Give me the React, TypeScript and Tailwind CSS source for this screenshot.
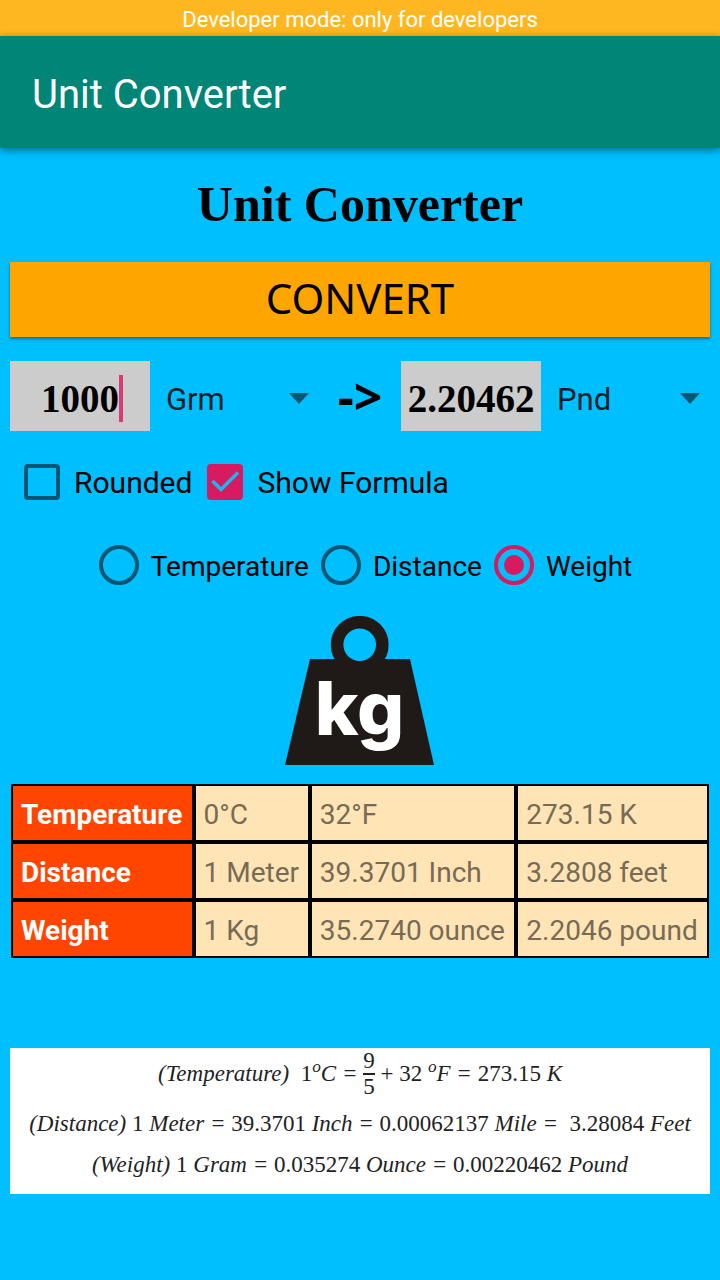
import { useState } from "react";

const table = [
  ["Temperature", "0°C", "32°F", "273.15 K"],
  ["Distance", "1 Meter", "39.3701 Inch", "3.2808 feet"],
  ["Weight", "1 Kg", "35.2740 ounce", "2.2046 pound"],
];

function UnitSelect({ label, options }: { label: string; options: string[] }) {
  return (
    <div className="relative h-full min-w-0">
      <select
        aria-label={label}
        className="h-full w-full appearance-none bg-transparent pt-2 pl-4 text-[31px] leading-10 text-black/85 outline-none"
      >
        {options.map((o) => (
          <option key={o}>{o}</option>
        ))}
      </select>
      <svg
        className="pointer-events-none absolute top-8 right-[10px] h-[11px] w-5 text-[#005673]"
        viewBox="0 0 20 11"
        fill="currentColor"
        aria-hidden="true"
      >
        <path d="M0 0h20L10 11z" />
      </svg>
    </div>
  );
}

function Check({ label, initial }: { label: string; initial: boolean }) {
  const [on, setOn] = useState(initial);
  return (
    <label className="flex items-center gap-[14px] text-[30px] leading-9">
      <span className="relative flex size-9">
        <input
          type="checkbox"
          checked={on}
          onChange={() => setOn(!on)}
          className="size-9 appearance-none rounded-[4px] border-4 border-[#005673] checked:border-[#d81b60] checked:bg-[#d81b60]"
        />
        {on && (
          <svg
            className="pointer-events-none absolute inset-0 size-9"
            viewBox="0 0 36 36"
            fill="none"
            stroke="#1fb4ee"
            strokeWidth="3.6"
            aria-hidden="true"
          >
            <path d="M5.5 17 L14 25.5 L31 8.5" />
          </svg>
        )}
      </span>
      <span className="pt-0.5">{label}</span>
    </label>
  );
}

function Kind({
  label,
  checked,
  onSelect,
}: {
  label: string;
  checked: boolean;
  onSelect: () => void;
}) {
  return (
    <label className="flex items-center gap-3 text-[28px] leading-9">
      <span className="relative flex size-10">
        <input
          type="radio"
          name="kind"
          checked={checked}
          onChange={onSelect}
          className="size-10 appearance-none rounded-full border-4 border-[#005673] checked:border-[#d81b60]"
        />
        {checked && (
          <span className="pointer-events-none absolute inset-[10px] rounded-full bg-[#d81b60]" />
        )}
      </span>
      <span className="pt-1">{label}</span>
    </label>
  );
}

export default function App() {
  const [value, setValue] = useState("1000");
  const [kind, setKind] = useState("Weight");

  return (
    <div className="flex min-h-screen flex-col bg-[#00bfff] font-['Roboto',sans-serif] text-black">
      <div className="bg-[#ffb721] pt-1.5 pb-0.5 text-center text-[22px] leading-7 text-white">
        Developer mode: only for developers
      </div>
      <header className="bg-[#008577] px-8 pt-[35px] pb-[29px] text-[40px] leading-12 text-white shadow-[0_2px_8px_rgba(0,0,0,0.45)]">
        Unit Converter
      </header>

      <main className="flex flex-col px-[10px]">
        <h1 className="pt-6 text-center font-['Liberation_Serif',serif] text-[50px] leading-16 font-bold">
          Unit Converter
        </h1>

        <button
          type="button"
          className="mt-[26px] h-[75px] bg-[#ffa500] pb-1 font-['Noto_Sans',sans-serif] text-[42px] leading-[71px] shadow-[0_2px_3px_rgba(0,0,0,0.4)]"
        >
          CONVERT
        </button>

        <div className="mt-6 grid h-[70px] grid-cols-[140px_1fr_82px_140px_1fr] items-center">
          <div className="relative h-full">
            <input
              aria-label="Value"
              value={value}
              onChange={(e) => setValue(e.target.value)}
              className="h-full w-full bg-[#cccccc] pt-1 text-center font-['Liberation_Serif',serif] text-[39px] font-bold caret-[#d81b60] outline-none"
            />
            <span className="pointer-events-none absolute top-[14px] left-[109px] h-[47px] w-1 bg-[#d93a72]" />
          </div>
          <UnitSelect label="From unit" options={["Grm", "Onc", "Pnd"]} />
          <span className="text-center font-['Noto_Sans',sans-serif] text-[50px] leading-[70px] font-bold">
            -&gt;
          </span>
          <input
            aria-label="Result"
            readOnly
            value="2.20462"
            className="h-full w-full bg-[#cccccc] pt-1 text-center font-['Liberation_Serif',serif] text-[39px] font-bold outline-none"
          />
          <UnitSelect label="To unit" options={["Pnd", "Onc", "Grm"]} />
        </div>

        <div className="mt-[32px] flex gap-[15px] pl-[14px]">
          <Check label="Rounded" initial={false} />
          <Check label="Show Formula" initial={true} />
        </div>

        <div className="mt-[44px] flex justify-center gap-3 pl-[11px]">
          {["Temperature", "Distance", "Weight"].map((k) => (
            <Kind key={k} label={k} checked={kind === k} onSelect={() => setKind(k)} />
          ))}
        </div>

        <svg
          className="mt-[31px] h-[149px] w-[150px] self-center"
          viewBox="0 0 150 149"
          role="img"
          aria-label="kg"
        >
          <path d="M25 43H125L149 149H0z" fill="#1f1a17" />
          <circle cx="74.7" cy="28.8" r="22.6" fill="#00bfff" stroke="#1f1a17" strokeWidth="12.6" />
          <text
            x="74.5"
            y="119"
            textAnchor="middle"
            fill="#ffffff"
            fontFamily="Inter, sans-serif"
            fontWeight="800"
            fontSize="74"
          >
            kg
          </text>
        </svg>

        <table className="mx-px mt-[19px] border-separate border-spacing-0 text-left text-[28px] leading-[50px] whitespace-nowrap">
          <tbody>
            {table.map(([name, ...cells]) => (
              <tr key={name}>
                <th scope="row" className="border-2 border-black bg-[#ff4500] px-2 pt-1 pb-0 font-bold text-white">
                  {name}
                </th>
                {cells.map((c) => (
                  <td key={c} className="border-2 border-black bg-[#ffe4b5] px-2 pt-1 pb-0 text-[#776b56]">
                    {c}
                  </td>
                ))}
              </tr>
            ))}
          </tbody>
        </table>

        <section
          aria-label="Formulas"
          className="mt-[90px] flex h-[146px] flex-col items-center bg-white font-['Liberation_Serif',serif] text-[23px] leading-7 whitespace-pre text-[#222222] italic"
        >
          <p className="flex h-[52px] items-center">
            <span>
              (Temperature){"  "}
              <span className="not-italic">1</span>
              <sup>o</sup>C ={" "}
            </span>
            <span className="flex flex-col items-center leading-6 not-italic">
              <span className="border-b-2 border-[#222222]">9</span>
              <span>5</span>
            </span>
            <span>
              <span className="not-italic"> + 32 </span>
              <sup>o</sup>F = <span className="not-italic">273.15</span> K
            </span>
          </p>
          <p className="mt-[10px]">
            (Distance) <span className="not-italic">1</span> Meter ={" "}
            <span className="not-italic">39.3701</span> Inch ={" "}
            <span className="not-italic">0.00062137</span> Mile ={"  "}
            <span className="not-italic">3.28084</span> Feet
          </p>
          <p className="mt-[13px]">
            (Weight) <span className="not-italic">1</span> Gram ={" "}
            <span className="not-italic">0.035274</span> Ounce ={" "}
            <span className="not-italic">0.00220462</span> Pound
          </p>
        </section>
      </main>
    </div>
  );
}
